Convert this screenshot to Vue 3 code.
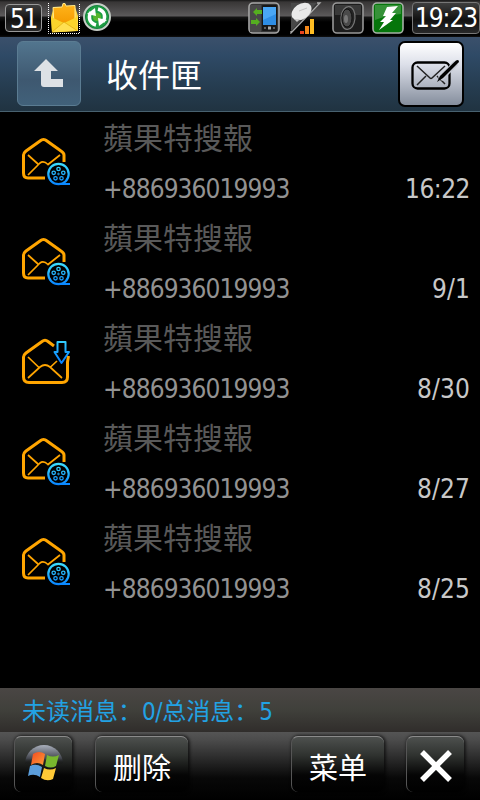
<script setup>
import { ref, computed } from 'vue'

const battery = ref(51)
const clock = ref('19:23')
const unread = ref(0)

const messages = ref([
    { id: 1, title: '蘋果特搜報', number: '+886936019993', time: '16:22', type: 'mms' },
    { id: 2, title: '蘋果特搜報', number: '+886936019993', time: '9/1', type: 'mms' },
    { id: 3, title: '蘋果特搜報', number: '+886936019993', time: '8/30', type: 'download' },
    { id: 4, title: '蘋果特搜報', number: '+886936019993', time: '8/27', type: 'mms' },
    { id: 5, title: '蘋果特搜報', number: '+886936019993', time: '8/25', type: 'mms' }
])

const total = computed(() => messages.value.length)

// 胶片盘上的小孔
const holes = [[0, -5], [4.8, -1.2], [3, 4.3], [-3, 4.3], [-4.8, -1.2]]

const removeAll = () => {
    messages.value = []
}
</script>

<template>
    <div class="phone">
        <div class="status-bar">
            <div class="battery"><span>{{ battery }}</span></div>
            <svg class="mail-icon" width="32" height="34" viewBox="48 0 32 34">
                <defs>
                    <linearGradient id="paper" x1="0" y1="0" x2="0" y2="1">
                        <stop offset="0" stop-color="#ffb51c" />
                        <stop offset="1" stop-color="#f59a00" />
                    </linearGradient>
                </defs>
                <path d="M48.5 3V33.5H79.5V3" fill="none" stroke="#fff" stroke-dasharray="1 1" />
                <path d="M51 17L54 7H75L78 16V31L52 32Z" fill="#ffd83d" />
                <path d="M53 7.500L62 7L63 3.500H65L66 6L75 5.500V24H54Z" fill="url(#paper)" stroke="#ffe98a" />
                <path d="M51 17L64 23L77 17L76.500 31L52 32.500Z" fill="#fbd52c" />
                <path d="M52 32L64 22L77 30.500" fill="#ffe052" stroke="#dfa90c" stroke-width=".7" />
            </svg>
            <svg class="sync-icon" width="30" height="30" viewBox="0 0 30 30">
                <circle cx="15" cy="15" r="13" fill="#16813c" stroke="#c6cdc6" stroke-width="2" />
                <circle cx="15" cy="15" r="11" fill="#1d9d42" />
                <circle cx="15" cy="15" r="4" fill="#55b52c" />
                <path d="M14 23C7 21 6 15 9 10" fill="none" stroke="#fff" stroke-width="3.400" />
                <path d="M5 12L13 6L14 14Z" fill="#fff" />
                <path d="M16 7C23 9 24 15 21 20" fill="none" stroke="#fff" stroke-width="3.400" />
                <path d="M25 18L17 24L16 16Z" fill="#fff" />
            </svg>
            <div class="tray">
                <svg width="32" height="32" viewBox="0 0 32 32">
                    <rect x="1" y="1" width="30" height="30" rx="4" fill="#353535" stroke="#a6a6a6" stroke-width="1.600" />
                    <path d="M2 3H13V30H2Z" fill="#484848" />
                    <rect x="14" y="3" width="15" height="26" rx="1" fill="#181818" />
                    <rect x="15" y="5" width="13" height="18" fill="#2f8ee5" />
                    <path d="M15 5H28V12L15 18Z" fill="#4aa7f5" />
                    <path d="M16 26H18M25 26H27" stroke="#777" stroke-width="1.500" />
                    <rect x="20" y="24.500" width="3" height="3" fill="#aaa" />
                    <path d="M5 10L9 6V8H14V12H9V14Z" fill="#55ae20" />
                    <path d="M12 20L8 16V18H3V22H8V24Z" fill="#55ae20" />
                </svg>
                <svg width="32" height="32" viewBox="0 0 32 32">
                    <path d="M1 1H30L1 30Z" fill="#484848" />
                    <path d="M1 29V31L30 1H27" fill="#333" stroke="#aaa" stroke-width="1.300" />
                    <ellipse cx="11.500" cy="9.500" rx="11" ry="7.500" transform="rotate(-35 11.500 9.500)" fill="#e9e9e9" />
                    <path d="M9 9L17 6" stroke="#c4c4c4" />
                    <path d="M4 17L10 17L7 20Z" fill="#ccc" />
                    <path d="M10 29H14V32H10Z" fill="#e74320" />
                    <path d="M15 24H19V32H15Z" fill="#f4891a" />
                    <path d="M20 17H24V32H20Z" fill="#ffbd22" />
                </svg>
                <svg width="32" height="32" viewBox="0 0 32 32">
                    <rect x="1" y="1" width="30" height="30" rx="4" fill="#1c1c1c" stroke="#989898" stroke-width="1.600" />
                    <path d="M3 3H29V13H3Z" fill="#393939" />
                    <ellipse cx="16" cy="16" rx="7" ry="11.500" transform="rotate(5 16 16)" fill="#252525" stroke="#777" stroke-width="1.200" />
                    <ellipse cx="15" cy="16" rx="5" ry="9" fill="#4a4a4a" stroke="#111" />
                    <ellipse cx="14" cy="17" rx="2" ry="4" fill="#777" />
                </svg>
                <svg width="32" height="32" viewBox="0 0 32 32">
                    <rect x="1" y="1" width="30" height="30" rx="4" fill="#05750b" stroke="#a7b0a7" stroke-width="1.600" />
                    <path d="M3 3H29V12Q16 13 3 18Z" fill="#359238" />
                    <path d="M15 5L26 4L20 11H24L18 18H21L7 28L12 20H8L14 14H11Z" fill="#fff" />
                </svg>
            </div>
            <div class="clock"><span>{{ clock }}</span></div>
        </div>

        <div class="header">
            <button class="back-btn">
                <svg width="62" height="62" viewBox="18 43 62 62">
                    <path d="M46 59L58 71H51V79H63V87H44Q41 87 41 84V71H34Z" fill="#dde1e5" />
                </svg>
            </button>
            <h1 class="header-title">收件匣</h1>
            <button class="compose-btn">
                <svg width="62" height="62" viewBox="400 43 62 62">
                    <rect x="412.500" y="62.500" width="37" height="26" rx="5" fill="none" stroke="#000" stroke-width="2.300" />
                    <path d="M417 66L430 78Q431 79 432 78L445 66M417 85L426 76M445 84L437 76" fill="none" stroke="#222" stroke-width="1.500" />
                    <path d="M440 79L456 63" stroke="#c5c9d3" stroke-width="6" />
                    <path d="M437 82L440 76L456 60.500Q459 59 459 62L443 78Z" fill="#000" />
                </svg>
            </button>
        </div>

        <div class="message-list">
            <div v-for="msg in messages" :key="msg.id" class="message">
                <svg class="message-icon" width="52" height="52" viewBox="20 135 52 52">
                    <defs>
                        <linearGradient id="blue" gradientUnits="userSpaceOnUse" x1="0" y1="163" x2="0" y2="185">
                            <stop offset="0" stop-color="#3de0ff" />
                            <stop offset="1" stop-color="#0884ff" />
                        </linearGradient>
                        <linearGradient id="arrow" gradientUnits="userSpaceOnUse" x1="0" y1="137" x2="0" y2="160">
                            <stop offset="0" stop-color="#3de0ff" />
                            <stop offset="1" stop-color="#0884ff" />
                        </linearGradient>
                    </defs>
                    <template v-if="msg.type === 'mms'">
                        <g fill="none" stroke="#ffa500">
                            <path d="M45 178H28Q23.500 178 23.500 173V155Q23.500 153 26 151L40 141Q43.500 138 47 141L61 151Q64 153 64 155V162" stroke-width="3" />
                            <path d="M28 155L38 164M28 175L40 163Q43.500 160 48 164.500L60 155" stroke-width="1.700" />
                        </g>
                        <g fill="none" stroke="url(#blue)">
                            <circle cx="58.500" cy="174" r="10.200" stroke-width="2.200" />
                            <circle v-for="(h, i) in holes" :key="i" :cx="58.500 + h[0]" :cy="174 + h[1]" r="1.700" stroke-width="1.300" />
                            <circle cx="58.500" cy="174" r=".8" />
                            <path d="M58 184L70 184.010" stroke-width="2" />
                        </g>
                    </template>
                    <template v-else>
                        <g fill="none" stroke="#ffa500">
                            <path d="M54 146L48 141.500Q45 139 42 141.500L26 153Q23.500 155 23.500 157V177Q23.500 182.500 29 182.500H62Q67.500 182.500 67.500 177V162L68.500 156" stroke-width="3" />
                            <path d="M28 157L39 167.500M28 178L40 167Q45 163 50 167L62 178M50 167.500L57 161" stroke-width="1.700" />
                        </g>
                        <path d="M57.500 142H65.500V152H69L61.500 163L54.500 152H57.500Z" fill="#000" stroke="url(#arrow)" stroke-width="2" stroke-linejoin="round" />
                    </template>
                </svg>
                <div class="message-body">
                    <div class="message-title">{{ msg.title }}</div>
                    <div class="message-meta">
                        <span class="message-number">{{ msg.number }}</span>
                        <span class="message-time" :class="{ date: msg.time.includes('/') }">{{ msg.time }}</span>
                    </div>
                </div>
            </div>
        </div>

        <div class="summary">未读消息：<span class="count">{{ unread }}/</span>总消息：<span class="count total">{{ total }}</span></div>

        <div class="toolbar">
            <button class="tool-btn start-btn">
                <svg width="42" height="42" viewBox="0 0 42 42">
                    <defs>
                        <linearGradient id="orb" x1="0" y1="0" x2="0" y2="1">
                            <stop offset="0" stop-color="#a9afbc" />
                            <stop offset=".35" stop-color="#454850" />
                            <stop offset=".5" stop-color="#080808" stop-opacity="0" />
                        </linearGradient>
                        <linearGradient id="red" x1="0" y1="0" x2="1" y2="1">
                            <stop offset="0" stop-color="#f14a22" />
                            <stop offset="1" stop-color="#ff9b35" />
                        </linearGradient>
                    </defs>
                    <circle cx="21" cy="20" r="19" fill="url(#orb)" />
                    <path d="M10 10Q16 6 22 10L20 21Q14 17 8 21Z" fill="url(#red)" />
                    <path d="M24 11Q30 14 36 11L33 22Q28 25 22 22Z" fill="#79b82e" />
                    <path d="M7 22Q13 19 19 23L17 33Q11 29 5 32Z" fill="#5b9edc" />
                    <path d="M21 24Q27 27 33 24L30 35Q24 38 18 34Z" fill="#ffc936" />
                </svg>
            </button>
            <button class="tool-btn delete-btn" @click="removeAll">删除</button>
            <button class="tool-btn menu-btn">菜单</button>
            <button class="tool-btn close-btn">
                <svg width="34" height="34" viewBox="0 0 34 34">
                    <path d="M3 3L31 31M31 3L3 31" stroke="#fff" stroke-width="5.500" />
                </svg>
            </button>
        </div>
    </div>
</template>

<style>
body {
    background: #000;
}
</style>

<style scoped>
.phone {
    width: 480px;
    height: 800px;
    display: flex;
    flex-direction: column;
    overflow: hidden;
    background: #000;
    font-family: 'DejaVu Sans Condensed', 'DejaVu Sans', 'Noto Sans CJK SC', sans-serif;
    font-stretch: condensed;
}

button {
    padding: 0;
    border: none;
    box-sizing: border-box;
    font-family: inherit;
    cursor: pointer;
}

svg {
    display: block;
    flex: none;
}

/* 顶部状态栏 */
.status-bar {
    height: 37px;
    box-sizing: border-box;
    display: flex;
    align-items: flex-start;
    background: linear-gradient(#181818 0, #383636 2px, #5c5a5b 16px, #161616 17px, #000 22px, #000 35px, #111 37px);
}

.battery,
.clock {
    display: flex;
    align-items: center;
    justify-content: center;
    box-sizing: border-box;
    border: 1px solid #999;
    border-radius: 4px;
    background: linear-gradient(#3e3e3e, #111 55%, #282828);
    color: #fff;
    font-size: 26px;
    line-height: 28px;
    letter-spacing: -1.5px;
}

.battery {
    width: 37px;
    height: 28px;
    margin: 4px 0 0 5px;
}

.battery span {
    padding-top: 1px;
}

.mail-icon {
    margin-left: 6px;
}

.sync-icon {
    margin: 2px 0 0 2px;
}

.tray {
    display: flex;
    margin: 2px 0 0 136px;
}

.tray svg + svg {
    margin-left: 10px;
}

.tray svg:nth-child(4) {
    margin-left: 8px;
}

.clock {
    width: 68px;
    height: 32px;
    margin: 2px 0 0 8px;
    border-color: #777;
    letter-spacing: -1.1px;
}

/* 标题栏 */
.header {
    height: 75px;
    box-sizing: border-box;
    display: flex;
    align-items: flex-start;
    padding: 4px 16px 0 17px;
    border-bottom: 1px solid #48616f;
    background: linear-gradient(#3b506b, #2f4a66 25%, #263d51 65%, #203341);
}

.back-btn {
    width: 64px;
    height: 65px;
    border: 1px solid #5b7c92;
    border-radius: 6px;
    background: linear-gradient(#52758e, #3e5870 60%, #41617a);
}

.header-title {
    flex: 1;
    margin: 9px 0 0 25px;
    color: #fff;
    font-family: 'Noto Sans CJK SC', sans-serif;
    font-size: 32px;
    font-weight: 400;
    line-height: 46px;
}

.compose-btn {
    width: 66px;
    height: 66px;
    border: 2px solid #000;
    border-radius: 7px;
    background: linear-gradient(#fff, #dcdfe9 35%, #858e9d);
}

/* 短信列表 */
.message-list {
    flex: 1;
}

.message {
    height: 100px;
    display: flex;
    padding: 0 10px 0 20px;
}

.message-icon {
    margin-top: 23px;
}

.message-body {
    flex: 1;
    margin-left: 31px;
}

.message-title {
    height: 52px;
    color: #595959;
    font-family: 'Noto Sans CJK TC', sans-serif;
    font-size: 30px;
    font-weight: 400;
    line-height: 49px;
}

.message-meta {
    display: flex;
    justify-content: space-between;
    font-size: 26px;
    line-height: 51px;
    letter-spacing: -0.9px;
}

.message-number {
    color: #929292;
}

.message-time {
    color: #c8c8c8;
    letter-spacing: -0.5px;
}

.message-time.date {
    letter-spacing: 0.1px;
}

/* 消息统计 */
.summary {
    height: 44px;
    padding-left: 22px;
    background: linear-gradient(#4a4644, #40403b 50%, #302d2b);
    color: #22a2e4;
    font-family: 'Noto Sans CJK SC', sans-serif;
    font-size: 24px;
    font-weight: 400;
    line-height: 43px;
    white-space: nowrap;
}

.count {
    font-family: 'DejaVu Sans Condensed', 'DejaVu Sans', sans-serif;
    font-stretch: condensed;
    letter-spacing: -0.4px;
}

.total {
    margin-left: 1px;
}

/* 底部工具栏 */
.toolbar {
    height: 68px;
    box-sizing: border-box;
    display: flex;
    padding: 4px 16px 0 14px;
    background: linear-gradient(#555, #4b4b4b 8px, #080808 46px, #000);
}

.tool-btn {
    height: 56px;
    display: flex;
    align-items: center;
    justify-content: center;
    border-top: 1px solid #8b8b8b;
    border-left: 1px solid #555;
    border-radius: 7px;
    background: linear-gradient(#4d504e, #303330 18px, #050505 38px, #000);
    box-shadow: 1px 0 3px 1px #0009;
    color: #fff;
    font-family: 'Noto Sans CJK SC', sans-serif;
    font-size: 29px;
    font-weight: 400;
}

.start-btn {
    width: 58px;
}

.delete-btn {
    width: 93px;
    margin-left: 23px;
    padding-top: 2px;
}

.menu-btn {
    width: 93px;
    margin-left: auto;
    padding-top: 2px;
}

.close-btn {
    width: 58px;
    margin-left: 22px;
    padding-top: 3px;
}
</style>
